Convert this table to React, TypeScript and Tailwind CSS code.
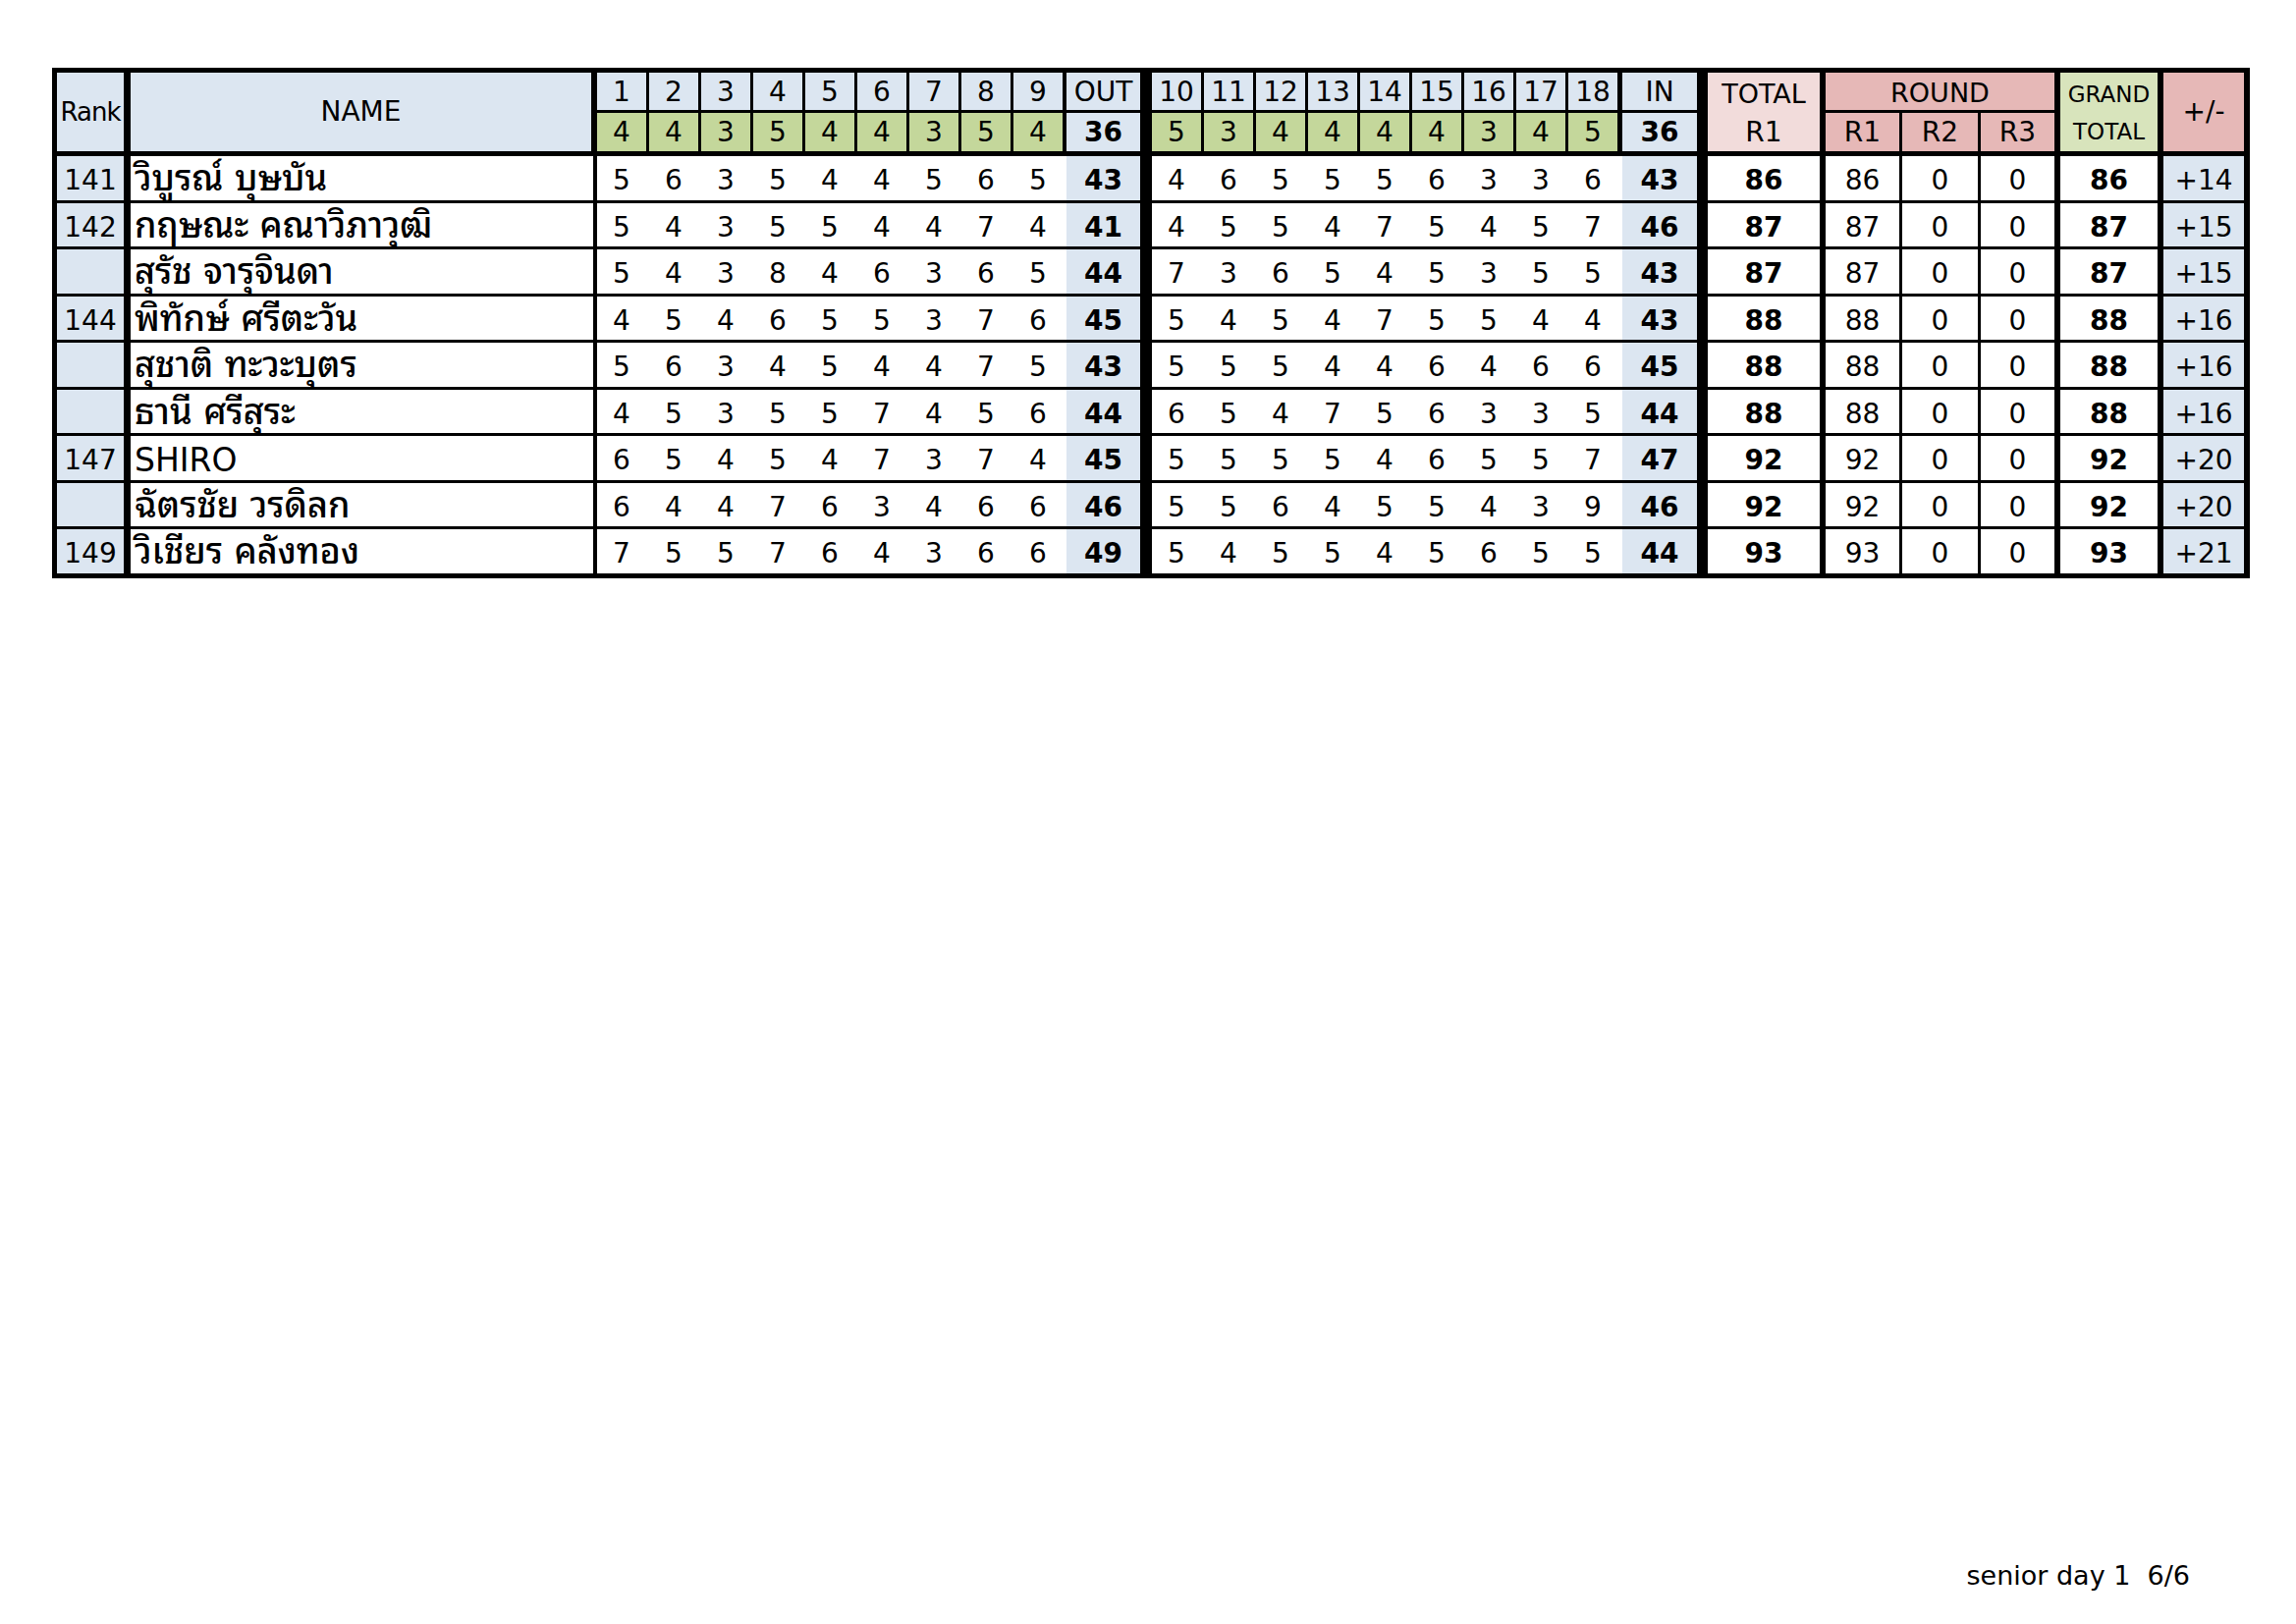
import React from "react";

const FONT =
  "font-['Tahoma','DejaVu_Sans','Noto_Sans_Thai_Looped','Noto_Serif_Thai','Loma','Garuda','Noto_Sans_Thai',sans-serif]";

const BLUE = "bg-[#dce6f1]";
const GREEN = "bg-[#c4d79b]";
const PINK_L = "bg-[#f2dcdb]";
const PINK = "bg-[#e6b8b7]";
const GREEN_L = "bg-[#d8e4bc]";

const front = ["1", "2", "3", "4", "5", "6", "7", "8", "9"];
const back = ["10", "11", "12", "13", "14", "15", "16", "17", "18"];
const parFront = [4, 4, 3, 5, 4, 4, 3, 5, 4];
const parBack = [5, 3, 4, 4, 4, 4, 3, 4, 5];

type Row = {
  rank: string;
  name: string;
  f: number[];
  out: number;
  b: number[];
  inn: number;
  total: number;
  diff: string;
};

const rows: Row[] = [
  { rank: "141", name: "วิบูรณ์ บุษบัน", f: [5, 6, 3, 5, 4, 4, 5, 6, 5], out: 43, b: [4, 6, 5, 5, 5, 6, 3, 3, 6], inn: 43, total: 86, diff: "+14" },
  { rank: "142", name: "กฤษณะ คณาวิภาวุฒิ", f: [5, 4, 3, 5, 5, 4, 4, 7, 4], out: 41, b: [4, 5, 5, 4, 7, 5, 4, 5, 7], inn: 46, total: 87, diff: "+15" },
  { rank: "", name: "สุรัช จารุจินดา", f: [5, 4, 3, 8, 4, 6, 3, 6, 5], out: 44, b: [7, 3, 6, 5, 4, 5, 3, 5, 5], inn: 43, total: 87, diff: "+15" },
  { rank: "144", name: "พิทักษ์ ศรีตะวัน", f: [4, 5, 4, 6, 5, 5, 3, 7, 6], out: 45, b: [5, 4, 5, 4, 7, 5, 5, 4, 4], inn: 43, total: 88, diff: "+16" },
  { rank: "", name: "สุชาติ ทะวะบุตร", f: [5, 6, 3, 4, 5, 4, 4, 7, 5], out: 43, b: [5, 5, 5, 4, 4, 6, 4, 6, 6], inn: 45, total: 88, diff: "+16" },
  { rank: "", name: "ธานี ศรีสุระ", f: [4, 5, 3, 5, 5, 7, 4, 5, 6], out: 44, b: [6, 5, 4, 7, 5, 6, 3, 3, 5], inn: 44, total: 88, diff: "+16" },
  { rank: "147", name: "SHIRO", f: [6, 5, 4, 5, 4, 7, 3, 7, 4], out: 45, b: [5, 5, 5, 5, 4, 6, 5, 5, 7], inn: 47, total: 92, diff: "+20" },
  { rank: "", name: "ฉัตรชัย วรดิลก", f: [6, 4, 4, 7, 6, 3, 4, 6, 6], out: 46, b: [5, 5, 6, 4, 5, 5, 4, 3, 9], inn: 46, total: 92, diff: "+20" },
  { rank: "149", name: "วิเชียร คลังทอง", f: [7, 5, 5, 7, 6, 4, 3, 6, 6], out: 49, b: [5, 4, 5, 5, 4, 5, 6, 5, 5], inn: 44, total: 93, diff: "+21" },
];

function HoleHeader({ label, par }: { label: string; par: number }) {
  return (
    <div className="w-[50px] flex flex-col gap-[3px]">
      <div className={`h-[38px] ${BLUE} flex items-center justify-center text-[28px] leading-none pt-[2px]`}>
        {label}
      </div>
      <div className={`flex-1 ${GREEN} flex items-center justify-center text-[28px] leading-none`}>
        {par}
      </div>
    </div>
  );
}

function SumHeader({ label, value, w }: { label: string; value: number; w: string }) {
  return (
    <div className={`${w} flex flex-col gap-[3px]`}>
      <div className={`h-[38px] ${BLUE} flex items-center justify-center text-[28px] leading-none pt-[2px]`}>
        {label}
      </div>
      <div className={`flex-1 ${BLUE} flex items-center justify-center text-[28px] font-bold leading-none`}>
        {value}
      </div>
    </div>
  );
}

function Header() {
  return (
    <div className="flex h-[80px]">
      <div className={`w-[68px] ${BLUE} flex items-center justify-center text-[26px] leading-none tracking-[-1px]`}>
        Rank
      </div>
      <div className={`ml-[7px] w-[469px] ${BLUE} flex items-center justify-center text-[28px] leading-none`}>
        NAME
      </div>
      <div className="ml-[6px] flex gap-[3px]">
        {front.map((h, i) => (
          <HoleHeader key={h} label={h} par={parFront[i]} />
        ))}
      </div>
      <div className="ml-[4px]">
        <SumHeader label="OUT" value={36} w="w-[75px] h-full" />
      </div>
      <div className="ml-[12px] flex gap-[3px]">
        {back.map((h, i) => (
          <HoleHeader key={h} label={h} par={parBack[i]} />
        ))}
      </div>
      <div className="ml-[5px]">
        <SumHeader label="IN" value={36} w="w-[76px] h-full" />
      </div>
      <div className={`ml-[11px] w-[114px] ${PINK_L} flex flex-col`}>
        <div className="h-[41px] flex items-center justify-center text-[27px] leading-none pt-[2px]">TOTAL</div>
        <div className="flex-1 flex items-center justify-center text-[28px] leading-none">R1</div>
      </div>
      <div className="ml-[6px] w-[233px] flex flex-col gap-[3px]">
        <div className={`h-[38px] ${PINK} flex items-center justify-center text-[27px] leading-none pt-[2px]`}>
          ROUND
        </div>
        <div className="flex-1 flex gap-[3px]">
          <div className={`w-[75px] ${PINK} flex items-center justify-center text-[28px] leading-none`}>R1</div>
          <div className={`w-[77px] ${PINK} flex items-center justify-center text-[28px] leading-none`}>R2</div>
          <div className={`w-[75px] ${PINK} flex items-center justify-center text-[28px] leading-none`}>R3</div>
        </div>
      </div>
      <div className={`ml-[6px] w-[99px] ${GREEN_L} flex flex-col`}>
        <div className="h-[41px] flex items-center justify-center text-[23px] leading-none pt-[3px]">GRAND</div>
        <div className="flex-1 flex items-center justify-center text-[23px] leading-none">TOTAL</div>
      </div>
      <div className={`ml-[6px] w-[82px] ${PINK} flex items-center justify-center text-[28px] leading-none`}>
        +/-
      </div>
    </div>
  );
}

function Cell({
  w,
  bg = "bg-white",
  bold = false,
  children,
  ml = "",
}: {
  w: string;
  bg?: string;
  bold?: boolean;
  children?: React.ReactNode;
  ml?: string;
}) {
  return (
    <div
      className={`${ml} ${w} ${bg} ${bold ? "font-bold" : ""} flex items-center justify-center text-[28px] leading-none pt-[6px]`}
    >
      {children}
    </div>
  );
}

function NameCell({ name }: { name: string }) {
  const thai = /[\u0E00-\u0E7F]/.test(name);
  return (
    <div
      className={`ml-[7px] w-[471px] bg-white flex items-center pl-[4px] leading-none whitespace-nowrap ${
        thai ? "text-[36px] font-medium pt-[2px]" : "text-[33px] pt-[4px]"
      }`}
    >
      {name}
    </div>
  );
}

function DataRow({ r }: { r: Row }) {
  return (
    <div className="flex h-[44.5px]">
      <Cell w="w-[68px]" bg={BLUE}>
        {r.rank}
      </Cell>
      <NameCell name={r.name} />
      <div className="ml-[4px] w-[478px] bg-white flex gap-[3px]">
        {r.f.map((s, i) => (
          <Cell key={i} w="w-[50px]">
            {s}
          </Cell>
        ))}
      </div>
      <Cell w="w-[75px]" bg={BLUE} bold>
        {r.out}
      </Cell>
      <div className="ml-[12px] w-[479px] bg-white flex gap-[3px]">
        {r.b.map((s, i) => (
          <Cell key={i} w="w-[50px]">
            {s}
          </Cell>
        ))}
      </div>
      <Cell w="w-[76px]" bg={BLUE} bold>
        {r.inn}
      </Cell>
      <Cell ml="ml-[11px]" w="w-[114px]" bold>
        {r.total}
      </Cell>
      <Cell ml="ml-[6px]" w="w-[75px]">
        {r.total}
      </Cell>
      <Cell ml="ml-[3px]" w="w-[77px]">
        0
      </Cell>
      <Cell ml="ml-[3px]" w="w-[75px]">
        0
      </Cell>
      <Cell ml="ml-[6px]" w="w-[99px]" bold>
        {r.total}
      </Cell>
      <Cell ml="ml-[6px]" w="w-[82px]" bg={BLUE}>
        {r.diff}
      </Cell>
    </div>
  );
}

export default function App() {
  return (
    <div className={`w-[2338px] h-[1654px] bg-white text-black ${FONT} flex flex-col overflow-hidden`}>
      <div className="ml-[53px] mt-[69px] w-[2238px] bg-black pt-[5px] pb-[5px] pl-[5px] pr-[6px] flex flex-col">
        <Header />
        <div className="mt-[5px] flex flex-col gap-[3px]">
          {rows.map((r, i) => (
            <DataRow key={i} r={r} />
          ))}
        </div>
      </div>
      <div className="mt-[1002px] flex justify-end pr-[108px]">
        <div className="text-[27px] leading-none whitespace-pre">senior day 1  6/6</div>
      </div>
    </div>
  );
}
